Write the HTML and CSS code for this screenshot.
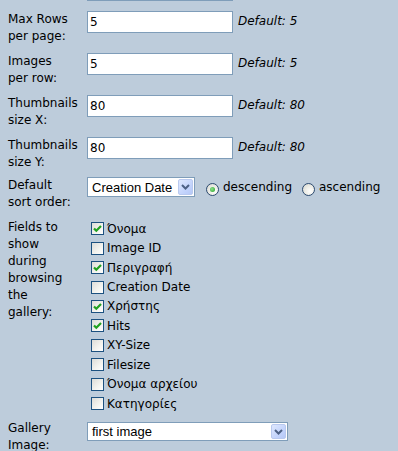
FILE: index.html
```html
<!DOCTYPE html>
<html lang="el">
<head>
    <meta charset="UTF-8">
    <title>Gallery settings</title>
    <link rel="stylesheet" href="styles.css">
</head>
<body>
    <div class="settings">
        <!-- bottom of the previous row, scrolled off the top -->
        <div class="row row-cut">
            <div class="label"></div>
            <div class="field"><input class="text" type="text" value=""></div>
        </div>

        <div class="row">
            <div class="label">Max Rows<br>per page:</div>
            <div class="field"><input class="text" type="text" value="5"><span class="hint">Default: 5</span></div>
        </div>
        <div class="row">
            <div class="label">Images<br>per row:</div>
            <div class="field"><input class="text" type="text" value="5"><span class="hint">Default: 5</span></div>
        </div>
        <div class="row">
            <div class="label">Thumbnails<br>size X:</div>
            <div class="field"><input class="text" type="text" value="80"><span class="hint">Default: 80</span></div>
        </div>
        <div class="row">
            <div class="label">Thumbnails<br>size Y:</div>
            <div class="field"><input class="text" type="text" value="80"><span class="hint">Default: 80</span></div>
        </div>

        <div class="row row-sort">
            <div class="label">Default<br>sort order:</div>
            <div class="field">
                <div class="select select-sort">
                    <span class="select-value">Creation Date</span>
                    <span class="select-btn"><svg width="9" height="6" viewBox="0 0 9 6"><path d="M1 1 L4.5 4.5 L8 1" stroke="#4d6185" stroke-width="2" fill="none"/></svg></span>
                </div>
                <span class="radio checked"></span><span class="radio-label">descending</span>
                <span class="radio"></span><span class="radio-label">ascending</span>
            </div>
        </div>

        <div class="row row-fields">
            <div class="label">Fields to<br>show<br>during<br>browsing<br>the<br>gallery:</div>
            <div class="field checklist">
                <div class="check-item"><span class="cb checked"><svg width="11" height="11" viewBox="0 0 11 11"><path d="M2 5.5 L4.3 7.8 L9 3" stroke="#21a121" stroke-width="2.2" fill="none"/></svg></span>Όνομα</div>
                <div class="check-item"><span class="cb"></span>Image ID</div>
                <div class="check-item"><span class="cb checked"><svg width="11" height="11" viewBox="0 0 11 11"><path d="M2 5.5 L4.3 7.8 L9 3" stroke="#21a121" stroke-width="2.2" fill="none"/></svg></span>Περιγραφή</div>
                <div class="check-item"><span class="cb"></span>Creation Date</div>
                <div class="check-item"><span class="cb checked"><svg width="11" height="11" viewBox="0 0 11 11"><path d="M2 5.5 L4.3 7.8 L9 3" stroke="#21a121" stroke-width="2.2" fill="none"/></svg></span>Χρήστης</div>
                <div class="check-item"><span class="cb checked"><svg width="11" height="11" viewBox="0 0 11 11"><path d="M2 5.5 L4.3 7.8 L9 3" stroke="#21a121" stroke-width="2.2" fill="none"/></svg></span>Hits</div>
                <div class="check-item"><span class="cb"></span>XY-Size</div>
                <div class="check-item"><span class="cb"></span>Filesize</div>
                <div class="check-item"><span class="cb"></span>Όνομα αρχείου</div>
                <div class="check-item"><span class="cb"></span>Κατηγορίες</div>
            </div>
        </div>

        <div class="row row-gallery">
            <div class="label">Gallery<br>Image:</div>
            <div class="field">
                <div class="select select-gallery">
                    <span class="select-value">first image</span>
                    <span class="select-btn"><svg width="9" height="6" viewBox="0 0 9 6"><path d="M1 1 L4.5 4.5 L8 1" stroke="#4d6185" stroke-width="2" fill="none"/></svg></span>
                </div>
            </div>
        </div>
    </div>
</body>
</html>
```

FILE: styles.css
```css
/* page */
body {
    margin: 0;
    background-color: #bdccdb;
    color: #000;
    font-family: "DejaVu Sans", Verdana, sans-serif;
    font-size: 12px;
    overflow: hidden;
}

.settings {
    padding-left: 8px;
}

/* form rows */
.row {
    display: grid;
    grid-template-columns: 79px 1fr;
    padding: 4px 0;
}

.row-cut {
    margin-top: -25px;
    padding-bottom: 6px;
}

.label {
    line-height: 17px;
    white-space: nowrap;
}

.field {
    display: flex;
    align-items: flex-start;
}

/* text inputs */
.text {
    box-sizing: border-box;
    width: 146px;
    height: 22px;
    margin: 0;
    padding: 0 2px;
    border: 1px solid #7f9db9;
    background: #fff;
    font-family: "DejaVu Sans", Verdana, sans-serif;
    font-size: 12px;
    color: #000;
}

.hint {
    font-style: italic;
    margin-left: 5px;
    line-height: 21px;
}

/* drop downs */
.select {
    box-sizing: border-box;
    display: flex;
    align-items: center;
    border: 1px solid #7f9db9;
    background: #fff;
    font-family: "Liberation Sans", Arial, sans-serif;
    font-size: 13px;
    padding: 1px;
}

.select-value {
    flex: 1;
    padding-left: 3px;
    white-space: nowrap;
}

.select-btn {
    box-sizing: border-box;
    display: flex;
    align-items: center;
    justify-content: center;
    width: 15px;
    height: 16px;
    border: 1px solid #b9c9ef;
    border-radius: 2px;
    background: linear-gradient(135deg, #dfe8fe 0%, #c4d4fc 60%, #b5c8f7 100%);
}

.select-sort {
    width: 108px;
    height: 20px;
}

.select-gallery {
    width: 201px;
    height: 19px;
    margin-top: 2px;
}

.select-gallery .select-btn {
    height: 15px;
}

/* sort order row */
.row-sort {
    padding: 2px 0 4px;
}

.radio {
    box-sizing: border-box;
    width: 13px;
    height: 13px;
    margin: 6px 4px 0 11px;
    border: 1px solid #2c4a6f;
    border-radius: 50%;
    background: radial-gradient(circle at 65% 65%, #fff 0%, #eeeee8 45%, #d3d3cc 100%);
    display: flex;
    align-items: center;
    justify-content: center;
}

.radio + .radio-label + .radio {
    margin-left: 10px;
}

.radio.checked::after {
    content: "";
    width: 5px;
    height: 5px;
    border-radius: 50%;
    background: radial-gradient(circle at 40% 40%, #8fe08f, #21a121);
}

.radio-label {
    line-height: 20px;
}

/* check boxes */
.row-fields {
    padding-bottom: 3px;
}

.checklist {
    flex-direction: column;
    padding-left: 4px;
}

.check-item {
    display: flex;
    align-items: center;
    height: 19.44px;
    white-space: nowrap;
}

.cb {
    box-sizing: border-box;
    display: flex;
    align-items: center;
    justify-content: center;
    width: 13px;
    height: 13px;
    margin-right: 3px;
    border: 1px solid #1c5180;
    background: linear-gradient(135deg, #dcdcd7 0%, #f4f4f0 60%, #fff 100%);
}
```
